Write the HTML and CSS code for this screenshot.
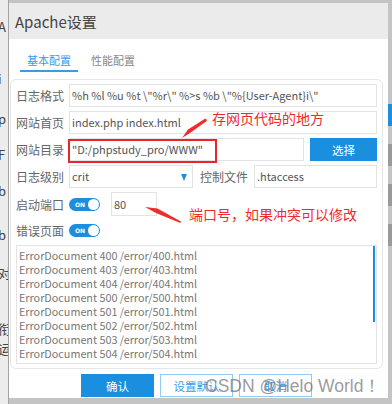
FILE: index.html
```html
<!DOCTYPE html>
<html>
<head>
    <meta charset="utf-8">
    <link rel="stylesheet" href="styles.css">
</head>

<body>
    <div class="page-edge">
        <span class="edge-glyph g1">A</span>
        <span class="edge-glyph g2">i</span>
        <span class="edge-glyph g3">p</span>
        <span class="edge-glyph g4">F</span>
        <span class="edge-glyph g5">b</span>
        <span class="edge-glyph g6">b</span>
        <span class="edge-glyph g7">对</span>
        <span class="edge-glyph g8">衔</span>
        <span class="edge-glyph g9">运</span>
    </div>

    <div class="dialog">
        <div class="dialog-title">Apache设置</div>

        <div class="tabs">
            <div class="tab active">基本配置</div>
            <div class="tab">性能配置</div>
        </div>

        <div class="panel">
            <div class="row">
                <span class="label">日志格式</span>
                <div class="field grow">%h %l %u %t \"%r\" %&gt;s %b \"%{User-Agent}i\"</div>
            </div>
            <div class="row">
                <span class="label">网站首页</span>
                <div class="field grow">index.php index.html</div>
            </div>
            <div class="row">
                <span class="label">网站目录</span>
                <div class="field grow">"D:/phpstudy_pro/WWW"</div>
                <a href="#" class="btn-pick">选择</a>
            </div>
            <div class="row">
                <span class="label">日志级别</span>
                <div class="field level">crit<span class="caret"></span></div>
                <span class="label label-ctl">控制文件</span>
                <div class="field grow">.htaccess</div>
            </div>
            <div class="row row-port">
                <span class="label">启动端口</span>
                <span class="switch"><span class="switch-text">ON</span><span class="knob"></span></span>
                <div class="field port">80</div>
            </div>
            <div class="row row-err">
                <span class="label">错误页面</span>
                <span class="switch"><span class="switch-text">ON</span><span class="knob"></span></span>
            </div>
            <div class="errors">
                <div>ErrorDocument 400 /error/400.html</div>
                <div>ErrorDocument 403 /error/403.html</div>
                <div>ErrorDocument 404 /error/404.html</div>
                <div>ErrorDocument 500 /error/500.html</div>
                <div>ErrorDocument 501 /error/501.html</div>
                <div>ErrorDocument 502 /error/502.html</div>
                <div>ErrorDocument 503 /error/503.html</div>
                <div>ErrorDocument 504 /error/504.html</div>
                <div>ErrorDocument 505 /error/505.html</div>
                <span class="scroll-thumb"></span>
            </div>
        </div>

        <div class="footer">
            <a href="#" class="btn btn-primary">确认</a>
            <a href="#" class="btn btn-line">设置默认</a>
            <a href="#" class="btn btn-line">取消</a>
        </div>
    </div>

    <div class="page-side">
        <span class="side-block blue"></span>
        <span class="side-block dark"></span>
        <span class="side-block dark"></span>
        <span class="side-block dark"></span>
    </div>

    <!-- red notes drawn on top of the screenshot -->
    <svg class="marks" width="392" height="404" viewBox="0 0 392 404">
        <rect x="69" y="140" width="147" height="22" fill="none" stroke="#e8262a" stroke-width="2"/>
        <polygon points="207,120 206,121.6 190,133 182,138 188,129.6 205.4,118.6" fill="#ef2b2b"/>
        <polygon points="181,221.4 180.4,223 156,213 145,207 157.4,208.4" fill="#ef2b2b"/>
    </svg>
    <div class="note note-dir">存网页代码的地方</div>
    <div class="note note-port">端口号，如果冲突可以修改</div>
    <div class="watermark">CSDN @Helo World！</div>
</body>
</html>
```

FILE: styles.css
```css
body, html {
margin: 0;
padding: 0;
}

body {
width: 392px;
height: 404px;
overflow: hidden;
position: relative;
display: flex;
background-color: #c4c4c4;
font-family: "Noto Sans CJK SC", sans-serif;
}

.page-edge {
width: 8px;
height: 404px;
background-color: #ececec;
border-right: 1px solid #a3a3a3;
overflow: hidden;
display: flex;
flex-direction: column;
font-size: 13px;
line-height: 14px;
color: #444;
}

.edge-glyph {
display: block;
white-space: nowrap;
margin-left: -2px;
}

.g1 { margin-top: 20px; }
.g2 { margin-top: 38px; }
.g3 { margin-top: 26px; }
.g4 { margin-top: 22px; }
.g5 { margin-top: 22px; }
.g6 { margin-top: 30px; }
.g7 { margin-top: 24px; }
.g8 { margin-top: 42px; }
.g9 { margin-top: 6px; }

.dialog {
width: 379px;
height: 395px;
margin-top: 3px;
background-color: #fff;
display: flex;
flex-direction: column;
}

.dialog-title {
height: 36px;
line-height: 38px;
padding-left: 6px;
background-color: #ebebeb;
font-size: 15px;
color: #444;
}

.tabs {
height: 40px;
display: flex;
align-items: flex-start;
padding-left: 11px;
box-sizing: border-box;
}

.tab {
padding: 13px 7px 2px 7px;
line-height: 16px;
font-size: 11px;
color: #888;
border-bottom: 2px solid transparent;
margin-right: 6px;
}

.tab.active {
color: #3a9be6;
border-bottom-color: #3a9be6;
}

.panel {
width: 373px;
height: 290px;
margin-left: 1px;
box-sizing: border-box;
border: 1px solid #e6e6e6;
border-radius: 6px;
padding: 4px 5px 4px 5px;
display: flex;
flex-direction: column;
gap: 4px;
}

.row {
display: flex;
align-items: center;
height: 23px;
}

.row-port {
height: 24px;
}

.row-err {
height: 21px;
}

.label {
width: 53px;
flex-shrink: 0;
font-size: 12px;
color: #666;
}

.label-ctl {
margin-left: 7px;
width: 54px;
}

.field {
height: 23px;
box-sizing: border-box;
border: 1px solid #e3e3e3;
padding-left: 2px;
font-size: 11px;
line-height: 21px;
color: #555;
white-space: nowrap;
overflow: hidden;
}

.grow {
flex: 1;
}

.level {
width: 124px;
position: relative;
}

.caret {
position: absolute;
right: 5px;
top: 8px;
border-left: 3.5px solid transparent;
border-right: 3.5px solid transparent;
border-top: 7px solid #1a8fe0;
}

.port {
width: 46px;
height: 24px;
margin-left: 11px;
line-height: 22px;
}

.btn-pick {
width: 67px;
height: 23px;
margin-left: 6px;
background-color: #1a8fe0;
color: #fff;
text-decoration: none;
font-size: 11.5px;
display: flex;
align-items: center;
justify-content: center;
}

.switch {
width: 31px;
height: 13px;
border-radius: 7px;
background-color: #1a8fe0;
display: flex;
align-items: center;
justify-content: space-between;
box-sizing: border-box;
padding: 0 1px 0 6px;
}

.switch-text {
font-family: "DejaVu Sans", sans-serif;
font-size: 6px;
font-weight: bold;
color: #fff;
line-height: 13px;
}

.knob {
width: 11px;
height: 11px;
border-radius: 50%;
background-color: #fff;
}

.errors {
height: 119px;
box-sizing: border-box;
border: 1px solid #e3e3e3;
padding: 2px 0 0 2px;
overflow: hidden;
position: relative;
font-size: 10.8px;
line-height: 14px;
color: #777;
}

.scroll-thumb {
position: absolute;
right: 1px;
top: 0;
width: 2px;
height: 76px;
background-color: #1a8fe0;
}

.footer {
display: flex;
gap: 6px;
padding: 5px 0 0 72px;
}

.btn {
width: 73px;
height: 23px;
box-sizing: border-box;
display: flex;
align-items: center;
justify-content: center;
font-size: 11.5px;
text-decoration: none;
}

.btn-primary {
background-color: #1a8fe0;
color: #fff;
}

.btn-line {
border: 1px solid #8fcbf2;
color: #3a9be6;
}

.page-side {
width: 4px;
display: flex;
flex-direction: column;
}

.side-block {
display: block;
height: 22px;
}

.side-block.blue {
margin-top: 104px;
background-color: #1a8fe0;
}

.side-block.dark {
margin-top: 18px;
background-color: #9a9a9a;
}

.marks {
position: absolute;
left: 0;
top: 0;
pointer-events: none;
}

.note {
position: absolute;
font-size: 14px;
line-height: 18px;
color: #ee2b2b;
white-space: nowrap;
}

.note-dir {
left: 212px;
top: 109px;
}

.note-port {
left: 189px;
top: 205px;
}

.watermark {
position: absolute;
left: 205px;
top: 375px;
font-family: "Liberation Sans", sans-serif;
font-size: 17.5px;
line-height: 22px;
color: rgba(110, 110, 110, 0.7);
white-space: nowrap;
}
```
